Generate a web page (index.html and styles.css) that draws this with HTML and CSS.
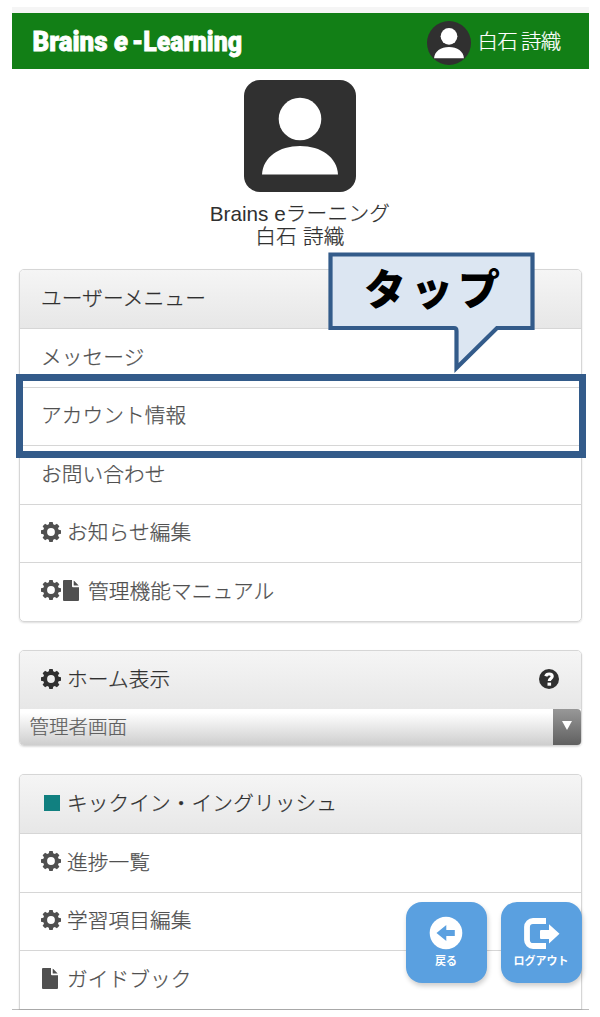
FILE: index.html
```html
<!DOCTYPE html>
<html lang="ja">
<head>
<meta charset="utf-8">
<title>Brains e-Learning</title>
<link rel="stylesheet" href="styles.css">
</head>
<body>
<svg class="defs" width="0" height="0" aria-hidden="true">
  <symbol id="gear" viewBox="0 0 20 20"><path fill-rule="evenodd" d="M8.300 0h3.400l.5 2.300 1.600.7 2.100-1.300 2.500 2.500-1.400 2.100.6 1.500 2.400.5v3.400l-2.400.5-.6 1.500 1.400 2.100-2.500 2.500-2.100-1.300-1.600.7-.5 2.300H8.300l-.5-2.300-1.600-.7-2.100 1.300-2.500-2.500L3 13.700l-.6-1.500-2.400-.5V8.300l2.400-.5L3 6.300 1.600 4.200l2.500-2.500L6.200 3l1.600-.7zM10 6.100a3.900 3.900 0 1 0 0 7.800 3.900 3.900 0 0 0 0-7.800z"/></symbol>
  <symbol id="file" viewBox="0 0 16 21"><path d="M1 0h8v6.200a1 1 0 0 0 1 1h6V20a1 1 0 0 1-1 1H1a1 1 0 0 1-1-1V1a1 1 0 0 1 1-1zM10.700.700a2 2 0 0 1 .6.400l3.900 3.900a2 2 0 0 1 .4.600h-4.900z"/></symbol>
  <symbol id="person" viewBox="0 0 112 112"><rect width="112" height="112" fill="#303030"/><circle cx="56" cy="39" r="21.300" fill="#fff"/><path d="M18 94.500C19 77 35 66 56 66s37 11 38 28.500z" fill="#fff"/></symbol>
</svg>
<main class="phone">
  <header class="topbar">
    <svg class="brand" width="224" height="44" viewBox="0 -5 224 44"><text x="0.500" y="27" textLength="75" lengthAdjust="spacingAndGlyphs">Brains</text><text class="brand-e" x="82" y="27" textLength="14" lengthAdjust="spacingAndGlyphs">e</text><text x="100" y="27" textLength="110" lengthAdjust="spacingAndGlyphs">-Learning</text></svg>
    <div class="account"><svg class="mini-avatar"><use href="#person"/></svg><span>白石 詩織</span></div>
  </header>
  <section class="profile">
    <svg class="avatar"><use href="#person"/></svg>
    <p class="name">Brains e<span class="kana">ラーニング</span><br><span class="kana">白石 詩織</span></p>
  </section>

  <section class="card">
    <h2 class="head"><span>ユーザーメニュー</span></h2>
    <a class="row"><span>メッセージ</span></a>
    <a class="row"><span>アカウント情報</span></a>
    <a class="row"><span>お問い合わせ</span></a>
    <a class="row"><svg class="gear"><use href="#gear"/></svg><span>お知らせ編集</span></a>
    <a class="row"><svg class="gear tight"><use href="#gear"/></svg><svg class="file wide"><use href="#file"/></svg><span>管理機能マニュアル</span></a>
    <div class="highlight"></div>
    <div class="callout">
      <svg width="210" height="126" viewBox="0 0 210 126"><path d="M2.500 2.500H204.500V76H169L128.500 116V79q0-3-2.500-3H2.500z" fill="#dce6f2" stroke="#335b8a" stroke-width="4.200"/></svg>
      <span class="tap">タップ</span>
    </div>
  </section>

  <section class="card">
    <h2 class="head split"><span class="label"><svg class="gear"><use href="#gear"/></svg><span>ホーム表示</span></span>
      <svg class="help" viewBox="0 0 20 20"><circle cx="10" cy="10" r="10"/><path d="M6.800 7.300C7.300 5.500 8.500 5 10.200 5c2 0 3 .8 3 2.300 0 2.200-2.900 2.200-2.900 4.700" fill="none" stroke="#fff" stroke-width="3.200"/><path d="M8.500 13.600h3.600v3.100H8.500z" fill="#fff"/></svg></h2>
    <div class="select"><span>管理者画面</span><div class="arrow"><svg width="10" height="9"><path d="M0 0h10L5 9z" fill="#fff"/></svg></div></div>
  </section>

  <section class="card last">
    <h2 class="head"><i class="square"></i><span>キックイン・イングリッシュ</span></h2>
    <a class="row"><svg class="gear"><use href="#gear"/></svg><span>進捗一覧</span></a>
    <a class="row"><svg class="gear"><use href="#gear"/></svg><span>学習項目編集</span></a>
    <a class="row"><svg class="file"><use href="#file"/></svg><span>ガイドブック</span></a>
  </section>
  <nav class="floating">
    <a class="tile"><svg width="34" height="34" viewBox="0 0 34 34"><circle cx="17" cy="17" r="16.300" fill="#fff"/><path d="M7.500 17l9.800-8v5h8.500v6h-8.500v5z" fill="#5aa0e0"/></svg><span>戻る</span></a>
    <a class="tile"><svg width="38" height="34" viewBox="0 0 38 34"><path d="M24 5H11a6 6 0 0 0-6 6v13a6 6 0 0 0 6 6h13" fill="none" stroke="#fff" stroke-width="5.800"/><path d="M19 14h8V8.300l10.500 9.500L27 27.500V23h-8q-1 0-1-1v-7q0-1 1-1z" fill="#fff"/></svg><span>ログアウト</span></a>
  </nav>
</main>
</body>
</html>
```
FILE: styles.css
```css
* { box-sizing: border-box; }
body { margin: 0; background: #fff; font-family: "Noto Sans CJK JP", sans-serif; font-weight: 300; }
.defs { position: absolute; }
.phone { position: relative; width: 577px; height: 1010px; margin-left: 11.5px; padding-top: 7px; border-bottom: 1px solid #bbb; }
.topbar { display: flex; justify-content: space-between; align-items: center; height: 62px; border-top: 6.500px solid #f5f5f5; background: #127f16; padding: 0 28px 0 20px; background-clip: padding-box; }
.brand { fill: #fff; font: 900 27.500px Roboto, sans-serif; stroke: #fff; stroke-width: .8px; }
.brand-e { font-style: italic; }
.account { display: flex; align-items: center; gap: 7px; color: #fff; font-size: 20.500px; line-height: 28px; }
.account span { margin-top: -3px; width: 83px; letter-spacing: -.7px; white-space: nowrap; -webkit-text-stroke: .2px; }
.mini-avatar { width: 44px; height: 44px; border-radius: 50%; margin-top: 4px; }
.profile { display: flex; flex-direction: column; align-items: center; padding-top: 11px; height: 200px; }
.avatar { width: 112px; height: 112px; border-radius: 16px; }
.name { margin: 11px 0 0; text-align: center; font-family: "Liberation Sans", "Noto Sans CJK JP", sans-serif; font-size: 20.700px; line-height: 22.500px; color: #303030; }
.kana { letter-spacing: .2px; -webkit-text-stroke: .25px; }
.card { position: relative; margin: 0 7px 28.500px; border: 1px solid #d6d6d6; border-radius: 5px; box-shadow: 0 1px 2px #0002; font-size: 20.700px; line-height: 30px; color: #505050; }
.head, .row { display: flex; align-items: center; margin: 0; padding: 0 21.500px; height: 58.500px; font-size: inherit; font-weight: 300; white-space: nowrap; }
.head > span:not(.label), .label > span, .row > span { margin-top: -4px; letter-spacing: .08px; -webkit-text-stroke: .25px; }
.head { height: 58px; color: #303030; background: linear-gradient(#f5f5f5, #e7e7e7); border-radius: 4px 4px 0 0; }
.row { border-top: 1.500px solid #d6d6d6; }
.split { justify-content: space-between; }
.label { display: flex; align-items: center; }
.gear { width: 20px; height: 20px; margin: -3px 6px 0 0; fill: #505050; }
.tight { margin-right: 2px; }
.head .gear { fill: #303030; }
.file { width: 16px; height: 21px; margin: -3px 9px 0 1px; fill: #505050; }
.wide { margin: -3px 9px 0 0; }
.help { width: 20px; height: 20px; margin-top: -3px; fill: #303030; }
.square { width: 16px; height: 16px; margin: -2px 7px 0 3px; background: #118080; }
.select { display: flex; justify-content: space-between; height: 35.500px; background: linear-gradient(#fff 10%, #cecece); border-radius: 0 0 4px 4px; color: #606060; font-size: 19.500px; line-height: 33px; padding-left: 10px; -webkit-text-stroke: .2px; }
.arrow { display: flex; justify-content: center; width: 28px; padding-top: 12px; background: linear-gradient(#989898, #606060); border-radius: 0 4px 4px 0; }
.last { height: 235px; margin-bottom: 0; border-bottom: 0; border-radius: 5px 5px 0 0; }
.highlight { position: absolute; left: -4px; top: 104px; width: 570.5px; height: 83.5px; border: 7px solid #335b8a; }
.callout { position: absolute; left: 308.5px; top: -18px; }
.tap { position: absolute; left: 36px; top: 5px; font-weight: 900; font-size: 42px; line-height: 60px; letter-spacing: 5px; color: #000; white-space: nowrap; }
.floating { position: absolute; right: 7px; top: 902px; display: flex; gap: 14px; }
.tile { display: flex; flex-direction: column; align-items: center; width: 81px; height: 81px; padding-top: 14px; border-radius: 16px; background: #5aa0e0; box-shadow: 1px 3px 5px #0003; color: #fff; font-size: 11px; font-weight: 700; line-height: 20px; }
```
